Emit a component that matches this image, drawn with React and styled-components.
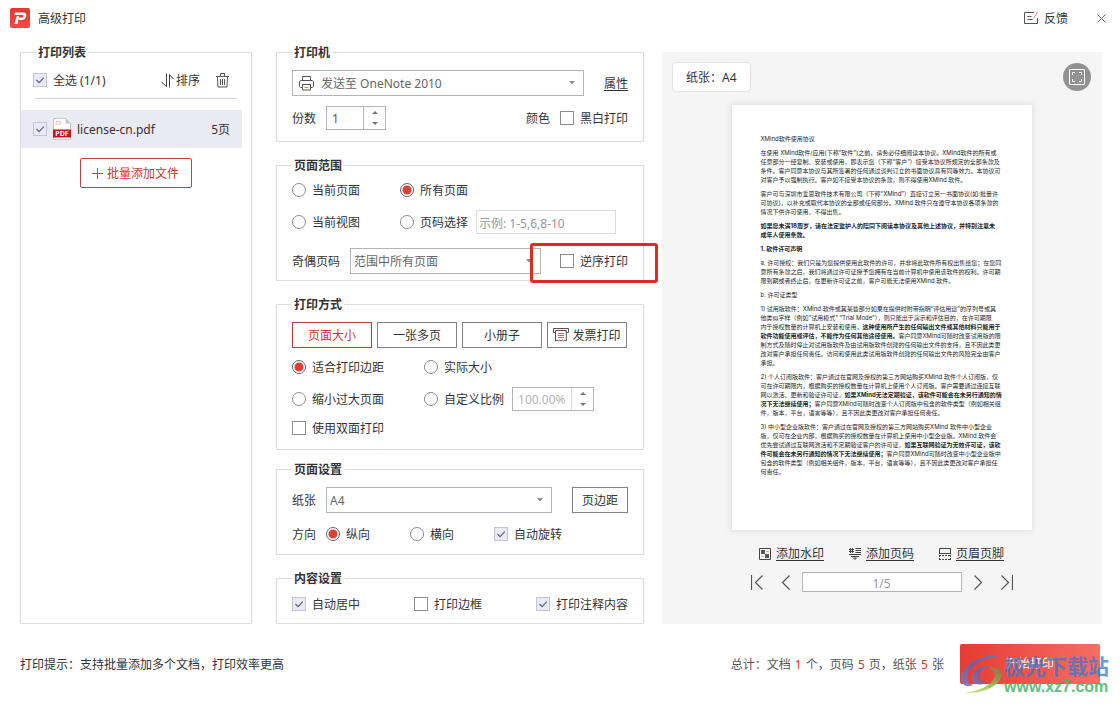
import React from "react";
import styled, { createGlobalStyle, css } from "styled-components";

const GlobalStyle = createGlobalStyle`
  * { box-sizing: border-box; }
  body {
    margin: 0;
    background: #fff;
    color: #333;
    font: 12px/16px "Noto Sans", "Noto Sans CJK SC", sans-serif;
  }
  button, input, select { font: inherit; color: inherit; margin: 0; padding: 0; }
  button { cursor: pointer; }
`;

const Window = styled.div`
  min-height: 100vh;
  display: flex;
  flex-direction: column;
`;

const TitleBar = styled.header`
  height: 36px;
  padding: 0 14px 0 10px;
  display: flex;
  align-items: center;
  gap: 8px;
`;

const Title = styled.h1`
  flex: 1;
  margin: 0;
  padding-top: 2px;
  font-size: 12px;
  font-weight: 400;
`;

const PlainButton = styled.button`
  display: flex;
  align-items: center;
  gap: ${(p) => p.$gap || 0}px;
  border: 0;
  background: none;
`;

const CloseButton = styled(PlainButton)`
  margin-left: 21px;
`;

const Text = styled.span`
  padding-top: 2px;
`;

const Main = styled.main`
  flex: 1;
  display: grid;
  grid-template-columns: 232px 410px minmax(0, 1fr);
  padding: 8px 18px 0 20px;
`;

const Section = styled.fieldset`
  position: relative;
  min-width: 0;
  margin: 0;
  padding: ${(p) => p.$pad || "10px 15px"};
  border: 1px solid #dcdcdc;
  display: flex;
  flex-direction: column;
  gap: ${(p) => p.$gap || 0}px;
`;

const Legend = styled.legend`
  margin-left: ${(p) => p.$inset || 0}px;
  padding: 2px 2px 0;
  line-height: 14px;
  font-weight: 700;
`;

const Settings = styled.div`
  margin: 0 18px 0 24px;
  display: flex;
  flex-direction: column;
  gap: 15px;
`;

const SettingsGroup = styled.div`
  display: flex;
  flex-direction: column;
  gap: 11px;
`;

const Row = styled.div`
  display: flex;
  align-items: center;
  min-height: ${(p) => p.$height || 24}px;
  gap: ${(p) => p.$gap || 0}px;
`;

const Rows = styled.div`
  display: flex;
  flex-direction: column;
  gap: 8px;
`;

const Cell = styled.div`
  display: flex;
  width: ${(p) => p.$width}px;
`;

const Spacer = styled.span`
  flex: 1;
`;

const ChoiceLabel = styled.label`
  display: inline-flex;
  align-items: center;
  gap: 6px;
  white-space: nowrap;
`;

const CheckBox = styled.input`
  appearance: none;
  flex: none;
  width: 14px;
  height: 14px;
  border: 1px solid #8c8c8c;
  background: #fff;
  &:checked {
    border-color: #c3c5d6;
    background: #e9eaf5 url("data:image/svg+xml,%3Csvg xmlns='http://www.w3.org/2000/svg' width='12' height='12' fill='none' stroke='%23555a80' stroke-width='1.1'%3E%3Cpath d='M2.5 6l2.6 2.6L9.8 3.6'/%3E%3C/svg%3E") center no-repeat;
  }
`;

const RadioButton = styled.input`
  appearance: none;
  flex: none;
  width: 14px;
  height: 14px;
  border: 1px solid #8c8c8c;
  border-radius: 50%;
  background: #fff;
  &:checked {
    border-color: #6e6464;
    background: radial-gradient(circle, #dc4137 0 4px, #fff 5px);
  }
`;

const Check = ({ label, ...rest }) => (
  <ChoiceLabel>
    <CheckBox type="checkbox" {...rest} />
    <Text>{label}</Text>
  </ChoiceLabel>
);

const Radio = ({ label, ...rest }) => (
  <ChoiceLabel>
    <RadioButton type="radio" {...rest} />
    <Text>{label}</Text>
  </ChoiceLabel>
);

const SelectFrame = styled.div`
  display: flex;
  align-items: center;
  width: ${(p) => p.$width}px;
  height: 26px;
  padding: 0 7px 0 ${(p) => (p.$icon ? 6 : 3)}px;
  gap: 7px;
  border: 1px solid #b4b4b4;
  background: #fff;
  color: #666;
`;

const SelectBox = styled.select`
  appearance: none;
  flex: 1;
  min-width: 0;
  height: 24px;
  padding-top: 2px;
  border: 0;
  background: none;
`;

const Caret = () => (
  <svg width="8" height="4" viewBox="0 0 8 4" aria-hidden="true">
    <path d="M1 0h6L4 3.5z" fill="#8a8a8a" />
  </svg>
);

const StepperFrame = styled.div`
  display: flex;
  width: ${(p) => p.$width}px;
  height: 24px;
  border: 1px solid #b4b4b4;
  color: ${(p) => (p.$dim ? "#b4b4b4" : "#555")};
`;

const StepperInput = styled.input`
  flex: 1;
  min-width: 0;
  border: 0;
  padding: 2px 0 0 5px;
  background: none;
`;

const StepperButtons = styled.div`
  width: 22px;
  border-left: 1px solid ${(p) => (p.$dim ? "#dcdcdc" : "#b4b4b4")};
  display: flex;
  flex-direction: column;
`;

const StepButton = styled.button`
  flex: 1;
  display: flex;
  align-items: center;
  justify-content: center;
  border: 0;
  background: none;
`;

const Stepper = ({ label, value, width, dim }) => (
  <StepperFrame $width={width} $dim={dim}>
    <StepperInput aria-label={label} defaultValue={value} />
    <StepperButtons $dim={dim}>
      <StepButton aria-label="增加">
        <svg width="6" height="3" viewBox="0 0 6 3"><path d="M0 3h6L3 0z" fill="#777" /></svg>
      </StepButton>
      <StepButton aria-label="减少">
        <svg width="6" height="3" viewBox="0 0 6 3"><path d="M0 0h6L3 3z" fill="#777" /></svg>
      </StepButton>
    </StepperButtons>
  </StepperFrame>
);

const RangeInput = styled.input`
  width: 140px;
  height: 24px;
  margin-left: 8px;
  padding: 2px 0 0 2px;
  border: 1px solid #dcdcdc;
  &::placeholder { color: #999; opacity: 1; }
`;

const FieldLabel = styled.label`
  margin-right: 10px;
  padding-top: 2px;
`;

const TextLink = styled.a`
  display: inline-flex;
  align-items: center;
  gap: 5px;
  padding-top: ${(p) => (p.$plain ? 2 : 0)}px;
  color: #333;
  text-decoration: underline;
  text-underline-offset: 2px;
`;

const ModeButton = styled.button`
  display: flex;
  align-items: center;
  justify-content: center;
  gap: 3px;
  width: ${(p) => p.$width || 80}px;
  height: 26px;
  border: 1px solid #828282;
  background: #fff;
  white-space: nowrap;
  ${(p) => p.$active && css`
    border-color: #b4413c;
    color: #c8372d;
    box-shadow: inset 0 0 3px #f8dcd9;
  `}
`;

const Highlight = styled.span`
  position: absolute;
  right: -15px;
  bottom: -3px;
  width: 128px;
  height: 40px;
  border: 3px solid #dc2d23;
  border-radius: 3px;
  pointer-events: none;
`;

const ListTools = styled.div`
  display: flex;
  align-items: center;
  height: 39px;
  margin: 0 14px;
  padding: 2px 8px 0 0;
  border-bottom: 1px solid #d2d2d2;
`;

const ListCheck = styled.div`
  display: flex;
  flex: 1;
  margin-left: -2px;
`;

const SortButton = styled(PlainButton)`
  margin-right: 16px;
`;

const FileRow = styled.div`
  display: flex;
  align-items: center;
  height: 38px;
  margin: 11px 9px 0 0;
  padding: 0 12px;
  background: #e9eaf2;
`;

const FileName = styled.span`
  flex: 1;
  margin-left: 6px;
  padding-top: 2px;
`;

const AddButton = styled.button`
  align-self: center;
  display: flex;
  align-items: center;
  justify-content: center;
  gap: 4px;
  width: 112px;
  height: 30px;
  margin: 10px 1px 0 0;
  border: 1px solid #b9443c;
  border-radius: 2px;
  background: #fff;
  color: #c8372d;
`;

const Preview = styled.section`
  margin-top: 8px;
  padding: 10px 11px 0 10px;
  background: #f5f5f5;
  display: flex;
  flex-direction: column;
  align-items: center;
`;

const PreviewTop = styled.div`
  align-self: stretch;
  display: flex;
  align-items: center;
  justify-content: space-between;
  height: 30px;
`;

const PaperTag = styled.span`
  padding: 7px 13px 5px;
  border: 1px solid #e4e4e4;
  border-radius: 4px;
  background: #fff;
`;

const RoundButton = styled.button`
  display: flex;
  align-items: center;
  justify-content: center;
  width: 28px;
  height: 28px;
  border: 0;
  border-radius: 50%;
  background: #919191;
`;

const Paper = styled.article`
  width: 300px;
  min-height: 425px;
  margin-top: 13px;
  padding: 29px 27px 0 29px;
  background: #fff;
  box-shadow: 0 0 5px 2px #e4e4e4;
  color: #1e1e1e;
  font: 6px/9px Inter, "Noto Sans CJK SC", sans-serif;
  white-space: nowrap;
`;

const Paragraph = styled.p`
  margin: 0 0 5px;
`;

const PreviewTools = styled.div`
  display: flex;
  gap: 25px;
  margin-top: 16px;
`;

const Pager = styled.nav`
  display: flex;
  align-items: center;
  gap: 12px;
  margin-top: 10px;
`;

const PagerEdge = styled.div`
  display: flex;
  align-items: center;
  gap: 18px;
`;

const PageInput = styled.input`
  width: 160px;
  height: 20px;
  padding-top: 2px;
  border: 1px solid #b4b4b4;
  background: #fff;
  color: #999;
  text-align: center;
`;

const Footer = styled.footer`
  display: flex;
  align-items: center;
  height: 80px;
  padding: 0 20px;
`;

const Tip = styled.p`
  flex: 1;
  margin: 0;
  padding-top: 2px;
`;

const Totals = styled.p`
  margin: 0 16px 0 0;
  padding-top: 2px;
  color: #555;
`;

const Count = styled.span`
  margin: 0 1px;
  color: #dc3228;
`;

const PrintArea = styled.div`
  position: relative;
`;

const PrintButton = styled.button`
  width: 140px;
  height: 40px;
  border: 0;
  border-radius: 2px;
  background: linear-gradient(90deg, #e63c32, #f56e64);
  color: #fff;
`;

const Watermark = styled.div`
  position: absolute;
  left: 0;
  top: 10px;
  display: flex;
  pointer-events: none;
  white-space: nowrap;
`;

const WatermarkText = styled.div`
  display: flex;
  flex-direction: column;
  font-weight: 700;
`;

const SiteName = styled.span`
  color: #3c78c8;
  opacity: 0.75;
  font-size: 21px;
  line-height: 24px;
`;

const SiteUrl = styled.span`
  color: #46b464;
  opacity: 0.85;
  font: 700 16px/18px "Liberation Sans", sans-serif;
`;

const Logo = () => (
  <svg width="20" height="20" viewBox="0 0 20 20" aria-hidden="true">
    <defs>
      <linearGradient id="logoRed" x1="0" y1="0" x2="0" y2="1">
        <stop offset="0" stopColor="#dc3c32" />
        <stop offset="1" stopColor="#fa4646" />
      </linearGradient>
    </defs>
    <rect width="20" height="20" rx="2" fill="url(#logoRed)" />
    <path d="M5 4.5h8.2c2.4 0 3.5 1.4 3.1 3.6-.5 2.7-2.2 4-4.8 4H8.9l.5-2.5h2.2c1 0 1.6-.4 1.8-1.4.2-.8-.2-1.2-1-1.2H4.500zM6.700 8.300h2.600L7.500 16H4.300z" fill="#fff" />
  </svg>
);

const FeedbackIcon = () => (
  <svg width="15" height="14" viewBox="0 0 15 14" fill="none" stroke="#555" aria-hidden="true">
    <path d="M10 1.500H.5v11h13V7M3.500 5.500h4M3.500 8.500h5" />
    <path d="M13.500 1L9.500 7.500" stroke="#e08078" />
  </svg>
);

const CloseIcon = () => (
  <svg width="9" height="9" viewBox="0 0 9 9" stroke="#666" aria-hidden="true">
    <path d="M.5.5l8 8M8.500.5l-8 8" />
  </svg>
);

const SortIcon = () => (
  <svg width="13" height="15" viewBox="0 0 13 15" fill="none" stroke="#444" aria-hidden="true">
    <path d="M5.500.5v13L.5 9M8.500 14.500v-13l4 4.500" />
  </svg>
);

const TrashIcon = () => (
  <svg width="13" height="15" viewBox="0 0 13 15" fill="none" stroke="#555" aria-hidden="true">
    <path d="M0 3.500h13M4.500 3V.5h4V3M1.500 3.500l.5 10.500h9l.5-10.500M4.500 6v6M6.500 6v6M8.500 6v6" />
  </svg>
);

const PdfIcon = () => (
  <svg width="18" height="22" viewBox="0 0 18 22" aria-hidden="true">
    <path d="M.5.5h12l5 5v16H.5z" fill="#fff" stroke="#c8c8c8" />
    <path d="M12.500.5v5h5z" fill="#c8c8c8" />
    <path d="M3 7.500V3.500h4.500v2.500H4" fill="none" stroke="#f0bcb8" />
    <rect y="11.500" width="18" height="8" fill="#be1420" />
    <text x="9" y="18" textAnchor="middle" fontSize="7" fontWeight="700" fontFamily="Noto Sans" fill="#fff">PDF</text>
  </svg>
);

const PlusIcon = () => (
  <svg width="11" height="11" viewBox="0 0 11 11" stroke="#cd4a42" aria-hidden="true">
    <path d="M0 5.500h11M5.500 0v11" />
  </svg>
);

const PrinterIcon = () => (
  <svg width="15" height="15" viewBox="0 0 15 15" fill="none" stroke="#555" aria-hidden="true">
    <path d="M3.500 4V.5h8V4M3.500 11.500H1.500l-1-1v-5l1-1h12l1 1v5l-1 1h-2M3.500 8.500h8v5.500h-8z" />
    <path d="M5.500 11.500h4" stroke="#dc8078" />
  </svg>
);

const InvoiceIcon = () => (
  <svg width="16" height="14" viewBox="0 0 16 14" fill="none" stroke="#555" aria-hidden="true">
    <path d="M2.500 4.500H.5v-4h15v4h-2M2.500 2.500h11M2.500 2.500v10.500l1.500-1 1.300 1 1.400-1 1.300 1 1.400-1 1.300 1 1.300-1 1.300 1V2.500" />
    <path d="M5 5.500h6M5 7.500h6M5 9.500h6" stroke="#d8605a" />
  </svg>
);

const ExpandIcon = () => (
  <svg width="16" height="16" viewBox="0 0 16 16" fill="none" stroke="#fff" aria-hidden="true">
    <path d="M.5.5h15v15H.5zM3.500 6V3.500H6M10 3.500h2.500V6M12.500 10v2.500H10M6 12.500H3.500V10" />
  </svg>
);

const WatermarkIcon = () => (
  <svg width="12" height="12" viewBox="0 0 12 12" aria-hidden="true">
    <path d="M.5.5h11v11H.5z" fill="none" stroke="#444" />
    <path d="M2 2h4v4H2zM6 6h4v4H6z" fill="#555" />
    <path d="M7.500 3.500h2M2.500 8.500h2" stroke="#aaa" />
  </svg>
);

const PageNumberIcon = () => (
  <svg width="12" height="12" viewBox="0 0 12 12" fill="none" stroke="#444" aria-hidden="true">
    <path d="M1.500 0v5M3.500 0v5M0 1.500h5M0 3.500h5M6.500.5H12M6.500 2.500H12M6.500 4.500H12M0 6.500h12M2 8.500h8M6 8v3M4 9.500l2 2 2-2" />
  </svg>
);

const HeaderFooterIcon = () => (
  <svg width="12" height="12" viewBox="0 0 12 12" fill="none" stroke="#444" aria-hidden="true">
    <path d="M.5 5V.5h11V5" />
    <path d="M0 5.500h12" />
    <path d="M0 7.500h12M0 11.500h12M.5 7v5M11.500 7v5" strokeDasharray="2 1" />
  </svg>
);

const PagerIcon = ({ edge, flip }) => (
  <svg
    width={edge ? 12 : 9}
    height="15"
    viewBox={edge ? "0 0 12 15" : "0 0 9 15"}
    fill="none"
    stroke="#555"
    strokeWidth="1.2"
    transform={flip ? "scale(-1 1)" : undefined}
    aria-hidden="true"
  >
    <path d={edge ? "M.5 0v15M11.500.5l-7 7 7 7" : "M8.500.5l-7 7 7 7"} />
  </svg>
);

const SwirlLogo = () => (
  <svg width="44" height="42" viewBox="0 0 44 42" aria-hidden="true">
    <defs>
      <linearGradient id="swirlBlue" x1="0" y1="1" x2="1" y2="0">
        <stop offset="0" stopColor="#8078b4" />
        <stop offset=".5" stopColor="#7a5a9c" />
        <stop offset="1" stopColor="#5a7fc0" />
      </linearGradient>
      <linearGradient id="swirlGreen" x1="0" y1="1" x2="1" y2="0">
        <stop offset="0" stopColor="#f0e08c" />
        <stop offset=".45" stopColor="#8cc850" />
        <stop offset="1" stopColor="#9a6a4a" />
      </linearGradient>
    </defs>
    <g opacity=".9">
      <path d="M40 2C28 1 15 4 7 12 0 19-1 27 4 31c3 2 7 1 9 0C8 29 6 24 9 18 13 10 24 4 40 2z" fill="url(#swirlBlue)" />
      <path d="M31 12c-9-1-18 4-19 11-1 7 8 10 15 5-5 0-9-2-8-6 1-5 6-9 12-10z" fill="url(#swirlBlue)" />
      <path d="M29 14c9-2 15 3 12 10-4 9-20 16-37 15 14-2 26-7 30-14 2-5 0-9-5-11z" fill="url(#swirlGreen)" />
    </g>
  </svg>
);

const PARAGRAPHS = [
  ["XMind软件使用协议"],
  [
    "在使用 XMind软件/应用(下称“软件”)之前，请务必仔细阅读本协议。XMind软件的所有或",
    "任意部分一经复制、安装或使用，即表示您（下称“客户”）接受本协议所规定的全部条款及",
    "条件。客户同意本协议与其所签署的任何通过谈判订立的书面协议具有同等效力。本协议可",
    "对客户予以强制执行。客户如不接受本协议的条款，则不得使用XMind 软件。",
  ],
  [
    "客户可与深圳市爱思软件技术有限公司（下称“XMind”）直接订立另一书面协议(如:批量许",
    "可协议)，以补充或取代本协议的全部或任何部分。XMind 软件只在遵守本协议各项条款的",
    "情况下供许可使用，不得出售。",
  ],
  [
    "*如果您未满18周岁，请在法定监护人的陪同下阅读本协议及其他上述协议，并特别注意未*",
    "*成年人使用条款。*",
  ],
  ["*1. 软件许可声明*"],
  [
    "a. 许可授权：我们只是为您提供使用此软件的许可，并非将此软件所有权出售给您；在您同",
    "意所有条款之后，我们将通过许可证授予您拥有在当前计算机中使用该软件的权利。许可期",
    "限到期或者终止后，在更新许可证之前，客户可能无法使用XMind 软件。",
  ],
  ["b. 许可证类型"],
  [
    "1) 试用版软件：XMind 软件或其某些部分如果在提供时附带指明“评估用途”的序列号或其",
    "他类似字样（例如“试用模式” “Trial Mode”），则只能出于演示和评估目的，在许可期限",
    "内于授权数量的计算机上安装和使用，*这种使用所产生的任何输出文件或其他材料只能用于*",
    "*软件功能使用或评估，不能作为任何其他途径使用。*客户同意XMind可随时改变试用版的限",
    "制方式及随时停止对试用版软件及由试用版软件创建的任何输出文件的支持，且不因此类更",
    "改对客户承担任何责任。访问和使用此类试用版软件创建的任何输出文件的风险完全由客户",
    "承担。",
  ],
  [
    "2) 个人订阅版软件：客户通过在官网及授权的第三方网站购买XMind 软件个人订阅版，仅",
    "可在许可期限内，根据购买的授权数量在计算机上使用个人订阅版。客户需要通过连接互联",
    "网以激活、更新和验证许可证，*如果XMind无法定期验证，该软件可能会在未另行通知的情*",
    "*况下无法继续使用；*客户同意XMind可随时改变个人订阅版中包含的软件类型（例如相关组",
    "件，版本，平台，语言等等），且不因此类更改对客户承担任何责任。",
  ],
  [
    "3) 中小型企业版软件：客户通过在官网及授权的第三方网站购买XMind 软件中小型企业",
    "版，仅可在企业内部，根据购买的授权数量在计算机上使用中小型企业版。XMind 软件会",
    "优先尝试通过互联网激活和不定期验证客户的许可证，*如果互联网验证为无效许可证，该软*",
    "*件可能会在未另行通知的情况下无法继续使用；*客户同意XMind可随时改变中小型企业版中",
    "包含的软件类型（例如相关组件，版本，平台，语言等等），且不因此类更改对客户承担任",
    "何责任。",
  ],
];

const Line = ({ text }) => (
  <>
    {text.split("*").map((part, i) => (i % 2 ? <strong key={i}>{part}</strong> : part))}
    <br />
  </>
);

export default function App() {
  return (
    <Window>
      <GlobalStyle />
      <TitleBar>
        <Logo />
        <Title>高级打印</Title>
        <PlainButton $gap={5}><FeedbackIcon /><Text>反馈</Text></PlainButton>
        <CloseButton aria-label="关闭"><CloseIcon /></CloseButton>
      </TitleBar>

      <Main>
        <Section $pad="0">
          <Legend $inset={15}>打印列表</Legend>
          <ListTools>
            <ListCheck><Check label="全选 (1/1)" defaultChecked /></ListCheck>
            <SortButton $gap={2}><SortIcon /><Text>排序</Text></SortButton>
            <PlainButton aria-label="删除"><TrashIcon /></PlainButton>
          </ListTools>
          <FileRow>
            <ChoiceLabel>
              <CheckBox type="checkbox" defaultChecked aria-label="license-cn.pdf" />
              <PdfIcon />
            </ChoiceLabel>
            <FileName>license-cn.pdf</FileName>
            <Text>5页</Text>
          </FileRow>
          <AddButton><PlusIcon /><Text>批量添加文件</Text></AddButton>
        </Section>

        <Settings>
          <Section $pad="10px 15px 11px" $gap={10}>
            <Legend>打印机</Legend>
            <Row>
              <SelectFrame $width={292} $icon>
                <PrinterIcon />
                <SelectBox aria-label="打印机"><option>发送至 OneNote 2010</option></SelectBox>
                <Caret />
              </SelectFrame>
              <Spacer />
              <TextLink href="#properties" $plain>属性</TextLink>
            </Row>
            <Row>
              <FieldLabel>份数</FieldLabel>
              <Stepper label="份数" value="1" width={60} />
              <Spacer />
              <FieldLabel as="span">颜色</FieldLabel>
              <Check label="黑白打印" />
            </Row>
          </Section>

          <Section $pad="5px 15px 6px" $gap={14}>
            <Legend>页面范围</Legend>
            <Rows>
              <Row>
                <Cell $width={108}><Radio name="range" label="当前页面" /></Cell>
                <Radio name="range" label="所有页面" defaultChecked />
              </Row>
              <Row>
                <Cell $width={108}><Radio name="range" label="当前视图" /></Cell>
                <Radio name="range" label="页码选择" />
                <RangeInput aria-label="页码选择" placeholder="示例: 1-5,6,8-10" />
              </Row>
            </Rows>
            <Row>
              <FieldLabel htmlFor="parity">奇偶页码</FieldLabel>
              <SelectFrame $width={191}>
                <SelectBox id="parity"><option>范围中所有页面</option></SelectBox>
                <Caret />
              </SelectFrame>
              <Spacer />
              <Check label="逆序打印" />
            </Row>
            <Highlight />
          </Section>

          <SettingsGroup>
            <Section $pad="10px 15px 12px" $gap={7}>
              <Legend>打印方式</Legend>
              <Row $gap={5}>
                <ModeButton $active><Text>页面大小</Text></ModeButton>
                <ModeButton><Text>一张多页</Text></ModeButton>
                <ModeButton><Text>小册子</Text></ModeButton>
                <ModeButton><InvoiceIcon /><Text>发票打印</Text></ModeButton>
              </Row>
              <Rows>
                <Row>
                  <Cell $width={132}><Radio name="scale" label="适合打印边距" defaultChecked /></Cell>
                  <Radio name="scale" label="实际大小" />
                </Row>
                <Row $gap={8}>
                  <Row>
                    <Cell $width={132}><Radio name="scale" label="缩小过大页面" /></Cell>
                    <Radio name="scale" label="自定义比例" />
                  </Row>
                  <Stepper label="自定义比例" value="100.00%" width={82} dim />
                </Row>
                <Row $height={18}><Check label="使用双面打印" /></Row>
              </Rows>
            </Section>

            <Section $pad="10px 15px 8px" $gap={9}>
              <Legend>页面设置</Legend>
              <Row>
                <FieldLabel htmlFor="paper">纸张</FieldLabel>
                <SelectFrame $width={226}>
                  <SelectBox id="paper"><option>A4</option></SelectBox>
                  <Caret />
                </SelectFrame>
                <Spacer />
                <ModeButton $width={56}><Text>页边距</Text></ModeButton>
              </Row>
              <Row>
                <FieldLabel as="span">方向</FieldLabel>
                <Cell $width={84}><Radio name="direction" label="纵向" defaultChecked /></Cell>
                <Cell $width={84}><Radio name="direction" label="横向" /></Cell>
                <Check label="自动旋转" defaultChecked />
              </Row>
            </Section>
          </SettingsGroup>

          <Section $pad="6px 15px 7px">
            <Legend>内容设置</Legend>
            <Row>
              <Cell $width={122}><Check label="自动居中" defaultChecked /></Cell>
              <Cell $width={122}><Check label="打印边框" /></Cell>
              <Check label="打印注释内容" defaultChecked />
            </Row>
          </Section>
        </Settings>

        <Preview>
          <PreviewTop>
            <PaperTag>纸张：A4</PaperTag>
            <RoundButton aria-label="全屏"><ExpandIcon /></RoundButton>
          </PreviewTop>
          <Paper>
            {PARAGRAPHS.map((lines, i) => (
              <Paragraph key={i}>
                {lines.map((text, j) => <Line key={j} text={text} />)}
              </Paragraph>
            ))}
          </Paper>
          <PreviewTools>
            <TextLink href="#watermark"><WatermarkIcon />添加水印</TextLink>
            <TextLink href="#number"><PageNumberIcon />添加页码</TextLink>
            <TextLink href="#header"><HeaderFooterIcon />页眉页脚</TextLink>
          </PreviewTools>
          <Pager>
            <PagerEdge>
              <PlainButton aria-label="首页"><PagerIcon edge /></PlainButton>
              <PlainButton aria-label="上一页"><PagerIcon /></PlainButton>
            </PagerEdge>
            <PageInput aria-label="页码" defaultValue="1/5" />
            <PagerEdge>
              <PlainButton aria-label="下一页"><PagerIcon flip /></PlainButton>
              <PlainButton aria-label="末页"><PagerIcon edge flip /></PlainButton>
            </PagerEdge>
          </Pager>
        </Preview>
      </Main>

      <Footer>
        <Tip>打印提示：支持批量添加多个文档，打印效率更高</Tip>
        <Totals>
          总计：文档 <Count>1</Count> 个，页码 <Count>5</Count> 页，纸张 <Count>5</Count> 张
        </Totals>
        <PrintArea>
          <PrintButton>开始打印</PrintButton>
          <Watermark>
            <SwirlLogo />
            <WatermarkText>
              <SiteName>极光下载站</SiteName>
              <SiteUrl>www.xz7.com</SiteUrl>
            </WatermarkText>
          </Watermark>
        </PrintArea>
      </Footer>
    </Window>
  );
}
